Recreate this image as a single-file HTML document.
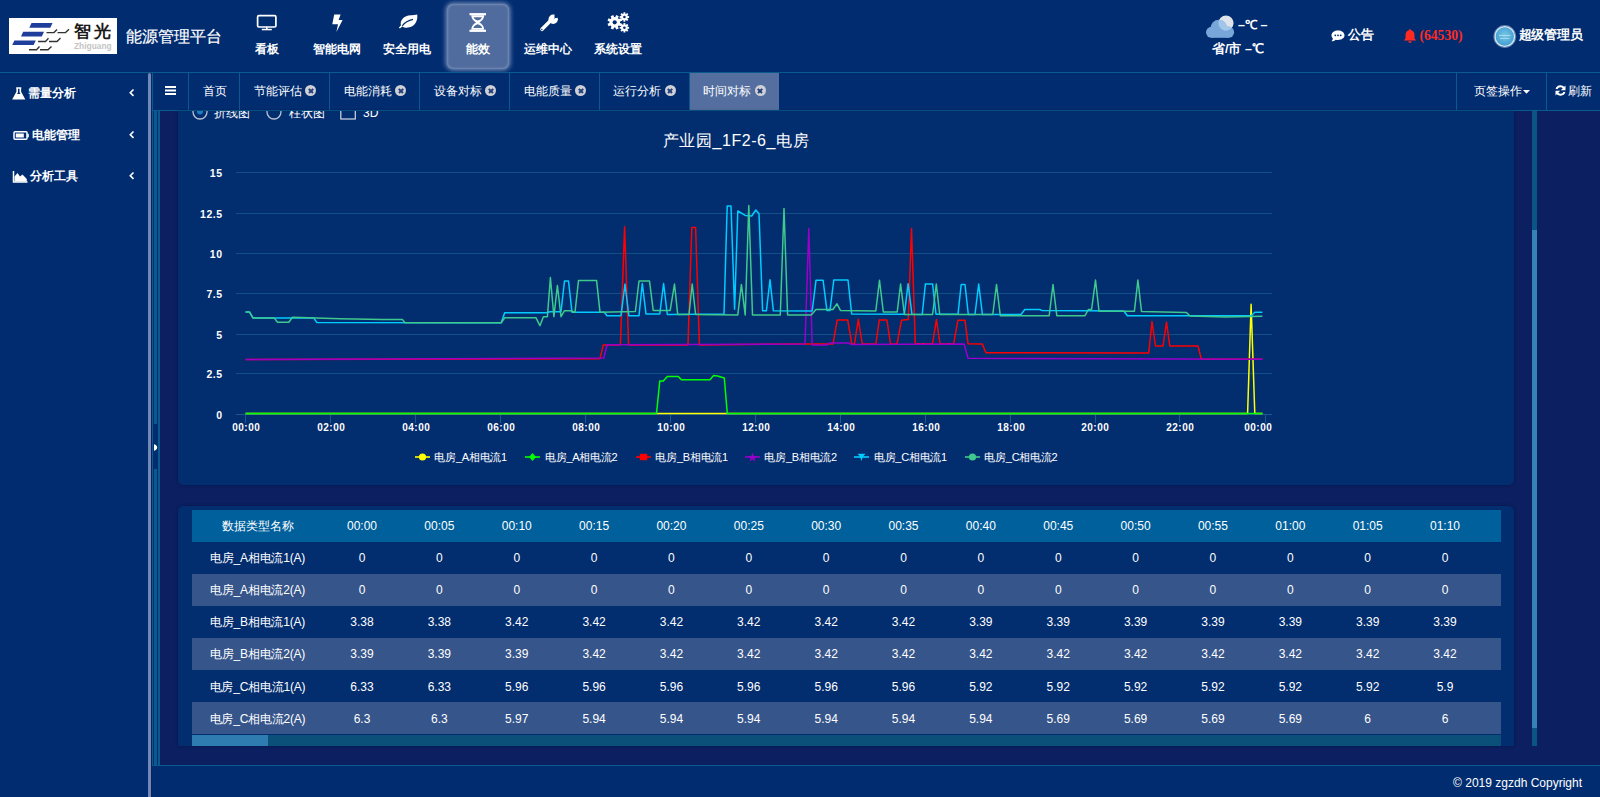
<!DOCTYPE html>
<html><head><meta charset="utf-8"><style>
*{margin:0;padding:0;box-sizing:border-box}
html,body{width:1600px;height:797px;overflow:hidden}
body{background:#0b1f61;font-family:"Liberation Sans",sans-serif;color:#fff;position:relative}
.a{position:absolute}
.t{position:absolute;white-space:nowrap;line-height:1}
.b{font-weight:bold}
.x{display:inline-block;width:11px;height:11px;border-radius:50%;background:#cfd0d6;position:absolute;top:13px}
.x:before,.x:after{content:"";position:absolute;left:2.5px;top:4.7px;width:6px;height:1.7px;background:#253f7a;transform:rotate(45deg)}
.x:after{transform:rotate(-45deg)}
</style></head><body>
<div class="a" style="left:0;top:0;width:1600px;height:72px;background:#012c70"></div>
<div class="a" style="left:9px;top:18px;width:108px;height:36px;background:#fff"></div>
<svg class="a" style="left:0;top:0" width="130" height="60" viewBox="0 0 130 60">
<polygon points="31.5,23 52.5,23 50.3,27.7 29.3,27.7" fill="#1f3e9c"/>
<polygon points="23.2,31.8 44,31.8 41.8,36.4 21,36.4" fill="#1f3e9c"/>
<polygon points="14.4,40.5 35.8,40.5 33.6,45 12.2,45" fill="#1f3e9c"/>
<g fill="none" stroke="#333" stroke-width="1.4">
<path d="M46.5,32.6 H54 L57,29.5 M57.5,32.6 H65.5 L69,29.3"/>
<path d="M38,41.5 H45.5 L48.5,38.3 M49,41.5 H57 L60.5,38.1"/>
<path d="M29,49.8 H36.5 L39.5,46.6 M40,49.8 H48 L51.5,46.4"/>
</g>
</svg>
<div class="t b" style="left:73.5px;top:23.2px;font-size:17px;color:#1a1a1a;letter-spacing:3px">智光</div>
<div class="t b" style="left:74px;top:42px;font-size:9px;color:#c4c4c4;transform:scaleX(0.93);transform-origin:0 0">Zhiguang</div>
<div class="t" style="left:126px;top:28.2px;font-size:16.4px;color:#fff;-webkit-text-stroke:0.2px #fff">能源管理平台</div>

<div class="a" style="left:446.5px;top:4px;width:62.5px;height:64.5px;background:#506c9e;border-radius:6px;box-shadow:0 0 5px 1px rgba(220,230,250,0.6), inset 0 0 3px rgba(220,230,250,0.5)"></div>
<div class="t b" style="left:227px;width:80px;text-align:center;top:42.5px;font-size:12px">看板</div>
<div class="t b" style="left:297.4px;width:80px;text-align:center;top:42.5px;font-size:12px">智能电网</div>
<div class="t b" style="left:367px;width:80px;text-align:center;top:42.5px;font-size:12px">安全用电</div>
<div class="t b" style="left:438px;width:80px;text-align:center;top:42.5px;font-size:12px">能效</div>
<div class="t b" style="left:508px;width:80px;text-align:center;top:42.5px;font-size:12px">运维中心</div>
<div class="t b" style="left:578px;width:80px;text-align:center;top:42.5px;font-size:12px">系统设置</div>
<svg class="a" style="left:0;top:0" width="700" height="40" viewBox="0 0 700 40">
<g fill="none" stroke="#fff" stroke-width="1.7">
<rect x="257.6" y="15.6" width="18.3" height="11.4" rx="1.3"/>
</g>
<rect x="261.8" y="28.8" width="10" height="1.5" fill="#fff"/>
<rect x="266" y="26.8" width="1.6" height="2.5" fill="#fff"/>
<path d="M334.2,14.6 L340.6,14.6 L338.6,19.9 L342.6,19.9 L336.4,31.9 L338,24.2 L332.3,24.2 Z" fill="#fff"/>
<path d="M417.2,14.6 C418,20 415.5,27 408,27.6 C405.5,27.8 403.5,27.2 402.2,26.4 L400,28.5 L398.8,27.7 L401,25.3 C400,22.5 401.6,18.6 405.6,16.6 C409,14.9 413.5,15.6 417.2,14.6 Z" fill="#fff"/>
<path d="M402.3,25.8 C404.8,22.3 408.5,20.2 413,19.3" fill="none" stroke="#012c70" stroke-width="1.2"/>
<g fill="#fff">
<rect x="469.5" y="13.1" width="16.5" height="2.2"/>
<rect x="469.5" y="29.7" width="16.5" height="2.2"/>
<path d="M471.3,15.3 H484.2 C484.2,19 481.5,21.3 479.4,22.5 C481.5,23.7 484.2,26 484.2,29.7 H471.3 C471.3,26 474,23.7 476.1,22.5 C474,21.3 471.3,19 471.3,15.3 Z M473.6,17.2 C474.2,19 475.8,20 477.75,20.6 C479.7,20 481.3,19 481.9,17.2 Z M473.3,28 H482.2 C481.5,26 479.6,24.8 477.75,24.3 C475.9,24.8 474,26 473.3,28 Z"/>
</g>
<line x1="542" y1="29.3" x2="550.5" y2="20.8" stroke="#fff" stroke-width="3.6" stroke-linecap="round"/>
<circle cx="553.2" cy="19.2" r="4.7" fill="#fff"/>
<path d="M553.6,18.8 L557.5,14.2 L559.5,16.5 Z" fill="#012c70"/>
<circle cx="556.4" cy="16" r="2.1" fill="#012c70"/>
<circle cx="541.8" cy="29.5" r="0.75" fill="#012c70"/>
<circle cx="614.7" cy="22.3" r="5.2" fill="#fff"/><rect x="613.3000000000001" y="15.100000000000001" width="2.8" height="7.2" fill="#fff" transform="rotate(22.5 614.7 22.3)"/><rect x="613.3000000000001" y="15.100000000000001" width="2.8" height="7.2" fill="#fff" transform="rotate(67.5 614.7 22.3)"/><rect x="613.3000000000001" y="15.100000000000001" width="2.8" height="7.2" fill="#fff" transform="rotate(112.5 614.7 22.3)"/><rect x="613.3000000000001" y="15.100000000000001" width="2.8" height="7.2" fill="#fff" transform="rotate(157.5 614.7 22.3)"/><rect x="613.3000000000001" y="15.100000000000001" width="2.8" height="7.2" fill="#fff" transform="rotate(202.5 614.7 22.3)"/><rect x="613.3000000000001" y="15.100000000000001" width="2.8" height="7.2" fill="#fff" transform="rotate(247.5 614.7 22.3)"/><rect x="613.3000000000001" y="15.100000000000001" width="2.8" height="7.2" fill="#fff" transform="rotate(292.5 614.7 22.3)"/><rect x="613.3000000000001" y="15.100000000000001" width="2.8" height="7.2" fill="#fff" transform="rotate(337.5 614.7 22.3)"/><circle cx="614.7" cy="22.3" r="2.1" fill="#012c70"/><circle cx="624.4" cy="17" r="3.3" fill="#fff"/><rect x="623.4499999999999" y="12.3" width="1.9" height="4.7" fill="#fff" transform="rotate(0.0 624.4 17)"/><rect x="623.4499999999999" y="12.3" width="1.9" height="4.7" fill="#fff" transform="rotate(45.0 624.4 17)"/><rect x="623.4499999999999" y="12.3" width="1.9" height="4.7" fill="#fff" transform="rotate(90.0 624.4 17)"/><rect x="623.4499999999999" y="12.3" width="1.9" height="4.7" fill="#fff" transform="rotate(135.0 624.4 17)"/><rect x="623.4499999999999" y="12.3" width="1.9" height="4.7" fill="#fff" transform="rotate(180.0 624.4 17)"/><rect x="623.4499999999999" y="12.3" width="1.9" height="4.7" fill="#fff" transform="rotate(225.0 624.4 17)"/><rect x="623.4499999999999" y="12.3" width="1.9" height="4.7" fill="#fff" transform="rotate(270.0 624.4 17)"/><rect x="623.4499999999999" y="12.3" width="1.9" height="4.7" fill="#fff" transform="rotate(315.0 624.4 17)"/><circle cx="624.4" cy="17" r="1.3" fill="#012c70"/><circle cx="624.4" cy="27.8" r="3.3" fill="#fff"/><rect x="623.4499999999999" y="23.1" width="1.9" height="4.7" fill="#fff" transform="rotate(0.0 624.4 27.8)"/><rect x="623.4499999999999" y="23.1" width="1.9" height="4.7" fill="#fff" transform="rotate(45.0 624.4 27.8)"/><rect x="623.4499999999999" y="23.1" width="1.9" height="4.7" fill="#fff" transform="rotate(90.0 624.4 27.8)"/><rect x="623.4499999999999" y="23.1" width="1.9" height="4.7" fill="#fff" transform="rotate(135.0 624.4 27.8)"/><rect x="623.4499999999999" y="23.1" width="1.9" height="4.7" fill="#fff" transform="rotate(180.0 624.4 27.8)"/><rect x="623.4499999999999" y="23.1" width="1.9" height="4.7" fill="#fff" transform="rotate(225.0 624.4 27.8)"/><rect x="623.4499999999999" y="23.1" width="1.9" height="4.7" fill="#fff" transform="rotate(270.0 624.4 27.8)"/><rect x="623.4499999999999" y="23.1" width="1.9" height="4.7" fill="#fff" transform="rotate(315.0 624.4 27.8)"/><circle cx="624.4" cy="27.8" r="1.3" fill="#012c70"/>
</svg>
<svg class="a" style="left:1200px;top:10px" width="40" height="32" viewBox="0 0 40 32">
<defs><clipPath id="cc"><circle cx="26" cy="13" r="7.6"/></clipPath></defs>
<circle cx="26" cy="13" r="7.6" fill="#dfe3ea"/>
<g fill="#78a6d8">
<circle cx="11.5" cy="22.3" r="5.5"/>
<circle cx="18.8" cy="18" r="8.2"/>
<circle cx="28.5" cy="22.2" r="5.6"/>
<rect x="11.5" y="20" width="17" height="7.8"/>
</g>
<g clip-path="url(#cc)" fill="#a2c6ea"><circle cx="18.8" cy="18" r="8.2"/><rect x="11.5" y="20" width="17" height="3"/><circle cx="28.5" cy="22.2" r="5.6"/></g>
</svg>
<div class="t b" style="left:1238px;top:19.2px;font-size:12.5px">–℃ –</div>
<div class="t b" style="left:1212px;top:43.2px;font-size:12.5px">省/市 –℃</div>
<svg class="a" style="left:1330px;top:29px" width="16" height="14" viewBox="0 0 16 14">
<path d="M8,1.5 C11.8,1.5 14.5,3.6 14.5,6.3 C14.5,9 11.8,11 8,11 C7.2,11 6.5,10.9 5.8,10.7 C4.5,11.8 3,12.3 1.5,12.3 C2.3,11.5 2.8,10.6 2.9,9.6 C2,8.7 1.5,7.6 1.5,6.3 C1.5,3.6 4.2,1.5 8,1.5 Z" fill="#fff"/>
<circle cx="5.3" cy="6.3" r="0.9" fill="#012c70"/><circle cx="8" cy="6.3" r="0.9" fill="#012c70"/><circle cx="10.7" cy="6.3" r="0.9" fill="#012c70"/>
</svg>
<div class="t b" style="left:1348px;top:29px;font-size:12.5px">公告</div>
<svg class="a" style="left:1402px;top:28px" width="16" height="16" viewBox="0 0 16 16">
<path d="M8,1.2 C8.8,1.2 9.2,1.7 9.2,2.3 C11.5,2.9 12.5,4.8 12.5,7.2 L12.5,10.5 L14.3,12.6 L1.7,12.6 L3.5,10.5 L3.5,7.2 C3.5,4.8 4.5,2.9 6.8,2.3 C6.8,1.7 7.2,1.2 8,1.2 Z M6.3,13.3 H9.7 C9.7,14.3 9,15 8,15 C7,15 6.3,14.3 6.3,13.3 Z" fill="#ff2a22"/>
</svg>
<div class="t b" style="left:1419.5px;top:28.5px;font-size:13.6px;color:#ff2a22;font-family:'Liberation Serif',serif">(64530)</div>
<svg class="a" style="left:1490px;top:22px" width="30" height="30" viewBox="0 0 30 30">
<defs><radialGradient id="ag" cx="50%" cy="45%" r="55%"><stop offset="0" stop-color="#7cc8e6"/><stop offset="1" stop-color="#3d9cd0"/></radialGradient></defs>
<circle cx="14.8" cy="14.5" r="10.8" fill="none" stroke="#9bb8d8" stroke-width="1.2" opacity="0.6"/>
<circle cx="14.8" cy="14.5" r="9.8" fill="url(#ag)" stroke="#d6e6f4" stroke-width="1.3"/>
<rect x="9" y="13" width="11.5" height="1" fill="#a5dcf0"/>
<rect x="10" y="16" width="9.5" height="0.9" fill="#a5dcf0"/>
</svg>
<div class="t b" style="left:1518.5px;top:29px;font-size:12.5px;letter-spacing:-0.1px">超级管理员</div>

<div class="a" style="left:0;top:72px;width:148px;height:725px;background:#012c70"></div>
<div class="a" style="left:148px;top:73px;width:3px;height:724px;background:#7189b5;border-radius:1.5px 1.5px 0 0"></div>
<div class="t b" style="left:28px;top:87.0px;font-size:12px">需量分析</div>
<svg class="a" style="left:128px;top:87.5px" width="8" height="10" viewBox="0 0 8 10"><path d="M5.5,1.5 L2.3,4.7 L5.5,7.9" fill="none" stroke="#fff" stroke-width="1.6"/></svg>
<div class="t b" style="left:31.5px;top:129.0px;font-size:12px">电能管理</div>
<svg class="a" style="left:128px;top:129.5px" width="8" height="10" viewBox="0 0 8 10"><path d="M5.5,1.5 L2.3,4.7 L5.5,7.9" fill="none" stroke="#fff" stroke-width="1.6"/></svg>
<div class="t b" style="left:30px;top:170.3px;font-size:12px">分析工具</div>
<svg class="a" style="left:128px;top:170.8px" width="8" height="10" viewBox="0 0 8 10"><path d="M5.5,1.5 L2.3,4.7 L5.5,7.9" fill="none" stroke="#fff" stroke-width="1.6"/></svg>
<svg class="a" style="left:0;top:80px" width="40" height="110" viewBox="0 0 40 110">
<path d="M16.2,8 H21.3 M17.2,8.2 V12 L13.5,18.8 H24 L20.3,12 V8.2" fill="none" stroke="#fff" stroke-width="1.6"/>
<path d="M16,14 H21.5 L24,18.8 H13.5 Z" fill="#fff"/>
<rect x="14" y="51.8" width="13" height="7.5" rx="1" fill="none" stroke="#fff" stroke-width="1.5"/>
<rect x="15.8" y="53.5" width="8" height="4" fill="#fff"/>
<rect x="27.2" y="53.8" width="1.6" height="3.5" fill="#fff"/>
<path d="M13.5,91 V102 H27.5" fill="none" stroke="#fff" stroke-width="1.5"/>
<path d="M14.5,101.5 V96.5 L17.5,93 L20,96.5 L22.5,94.5 L26.8,99 V101.5 Z" fill="#fff"/>
</svg>
<div class="a" style="left:151px;top:72px;width:1449px;height:39px;background:#012c70"></div>
<div class="a" style="left:0;top:72px;width:1600px;height:1px;background:#0a5a8e"></div>
<div class="a" style="left:152px;top:110px;width:1448px;height:1px;background:#0a5a8e"></div>
<div class="a" style="left:152px;top:73px;width:1px;height:692px;background:#0a5a8e"></div>
<svg class="a" style="left:164px;top:85px" width="14" height="12" viewBox="0 0 14 12"><rect x="1" y="1" width="11" height="2" fill="#fff"/><rect x="1" y="4.5" width="11" height="2" fill="#fff"/><rect x="1" y="8" width="11" height="2" fill="#fff"/></svg>
<div class="a" style="left:188px;top:73px;width:1px;height:37px;background:#0a5a8e"></div>
<div class="a" style="left:239px;top:73px;width:1px;height:37px;background:#0a5a8e"></div>
<div class="a" style="left:329px;top:73px;width:1px;height:37px;background:#0a5a8e"></div>
<div class="a" style="left:419px;top:73px;width:1px;height:37px;background:#0a5a8e"></div>
<div class="a" style="left:509px;top:73px;width:1px;height:37px;background:#0a5a8e"></div>
<div class="a" style="left:599px;top:73px;width:1px;height:37px;background:#0a5a8e"></div>
<div class="a" style="left:689px;top:73px;width:1px;height:37px;background:#0a5a8e"></div>
<div class="a" style="left:1456px;top:73px;width:1px;height:37px;background:#0a5a8e"></div>
<div class="a" style="left:1546px;top:73px;width:1px;height:37px;background:#0a5a8e"></div>
<div class="a" style="left:690px;top:73px;width:89px;height:37px;background:#546f9f"></div>
<div class="t" style="left:202.5px;top:84.5px;font-size:12px">首页</div>
<div class="t" style="left:253.75px;top:84.5px;font-size:12px">节能评估</div>
<span class="x" style="left:305.25px;top:85px"></span>
<div class="t" style="left:343.75px;top:84.5px;font-size:12px">电能消耗</div>
<span class="x" style="left:395.25px;top:85px"></span>
<div class="t" style="left:433.75px;top:84.5px;font-size:12px">设备对标</div>
<span class="x" style="left:485.25px;top:85px"></span>
<div class="t" style="left:523.75px;top:84.5px;font-size:12px">电能质量</div>
<span class="x" style="left:575.25px;top:85px"></span>
<div class="t" style="left:613.25px;top:84.5px;font-size:12px">运行分析</div>
<span class="x" style="left:664.75px;top:85px"></span>
<div class="t" style="left:703px;top:84.5px;font-size:12px">时间对标</div>
<span class="x" style="left:754.5px;top:85px"></span>
<div class="t" style="left:1474px;top:84.5px;font-size:12px">页签操作</div>
<svg class="a" style="left:1522px;top:89px" width="9" height="6" viewBox="0 0 9 6"><path d="M1,1 H8 L4.5,4.8 Z" fill="#fff"/></svg>
<svg class="a" style="left:1554px;top:84px" width="13" height="13" viewBox="0 0 13 13">
<path d="M10.3,4.5 A4.3,4.3 0 0 0 2.5,5" fill="none" stroke="#fff" stroke-width="2"/>
<path d="M11.5,1.5 V6.2 H6.8 Z" fill="#fff"/>
<path d="M2.7,8.5 A4.3,4.3 0 0 0 10.5,8" fill="none" stroke="#fff" stroke-width="2"/>
<path d="M1.5,11.5 V6.8 H6.2 Z" fill="#fff"/>
</svg>
<div class="t" style="left:1568.4px;top:84.5px;font-size:12px">刷新</div>
<div class="a" style="left:153px;top:111px;width:5px;height:654px;background:#012c70"></div>
<div class="a" style="left:154px;top:111px;width:3px;height:313px;background:#0b5a8f"></div>
<div class="a" style="left:154px;top:469px;width:3px;height:296px;background:#0b5a8f"></div>
<div class="a" style="left:158px;top:111px;width:2px;height:654px;background:#0a5a8e"></div>
<svg class="a" style="left:154px;top:443.5px" width="4" height="8" viewBox="0 0 4 8"><path d="M0,0.3 L1.5,0.8 C2.6,1.6 3.2,2.6 3.2,3.5 C3.2,4.4 2.6,5.4 1.5,6.2 L0,6.7 Z" fill="#fff"/></svg>
<div class="a" style="left:178px;top:111px;width:1335.5px;height:374px;background:#022d6f;border-radius:0 0 5px 5px;box-shadow:0 0 3px rgba(0,0,20,0.35)"></div>
<div class="a" style="left:178px;top:111px;width:400px;height:20px;overflow:hidden">
<svg class="a" style="left:0;top:-20px" width="400" height="40" viewBox="178 91 400 40">
<circle cx="200" cy="112" r="7" fill="none" stroke="#b9c2d3" stroke-width="1.3"/>
<circle cx="200" cy="111.5" r="3" fill="#1d7cc4"/>
<circle cx="274" cy="112" r="7" fill="none" stroke="#b9c2d3" stroke-width="1.3"/>
<rect x="340.8" y="104.5" width="14.5" height="14.5" fill="none" stroke="#d5dae4" stroke-width="1.2"/>
</svg>
<div class="t" style="left:36.4px;top:-4.5px;font-size:12px">折线图</div>
<div class="t" style="left:110.7px;top:-4.5px;font-size:12px">柱状图</div>
<div class="t" style="left:185px;top:-4.5px;font-size:12px">3D</div>
</div>
<svg class="a" style="left:0;top:0" width="1600" height="500" viewBox="0 0 1600 500"><line x1="236" y1="172.5" x2="1272" y2="172.5" stroke="#134f87" stroke-width="1"/><line x1="236" y1="213.5" x2="1272" y2="213.5" stroke="#134f87" stroke-width="1"/><line x1="236" y1="253.5" x2="1272" y2="253.5" stroke="#134f87" stroke-width="1"/><line x1="236" y1="293.5" x2="1272" y2="293.5" stroke="#134f87" stroke-width="1"/><line x1="236" y1="334.5" x2="1272" y2="334.5" stroke="#134f87" stroke-width="1"/><line x1="236" y1="373.5" x2="1272" y2="373.5" stroke="#134f87" stroke-width="1"/><line x1="236" y1="414.5" x2="1272" y2="414.5" stroke="#1a5a90" stroke-width="1"/><line x1="245.5" y1="414" x2="245.5" y2="423" stroke="#1a5a90" stroke-width="1"/><line x1="330.5" y1="414" x2="330.5" y2="423" stroke="#1a5a90" stroke-width="1"/><line x1="415.5" y1="414" x2="415.5" y2="423" stroke="#1a5a90" stroke-width="1"/><line x1="500.5" y1="414" x2="500.5" y2="423" stroke="#1a5a90" stroke-width="1"/><line x1="585.5" y1="414" x2="585.5" y2="423" stroke="#1a5a90" stroke-width="1"/><line x1="670.5" y1="414" x2="670.5" y2="423" stroke="#1a5a90" stroke-width="1"/><line x1="755.5" y1="414" x2="755.5" y2="423" stroke="#1a5a90" stroke-width="1"/><line x1="840.5" y1="414" x2="840.5" y2="423" stroke="#1a5a90" stroke-width="1"/><line x1="925.5" y1="414" x2="925.5" y2="423" stroke="#1a5a90" stroke-width="1"/><line x1="1010.5" y1="414" x2="1010.5" y2="423" stroke="#1a5a90" stroke-width="1"/><line x1="1095.5" y1="414" x2="1095.5" y2="423" stroke="#1a5a90" stroke-width="1"/><line x1="1179.5" y1="414" x2="1179.5" y2="423" stroke="#1a5a90" stroke-width="1"/><line x1="1265.5" y1="414" x2="1265.5" y2="423" stroke="#1a5a90" stroke-width="1"/><polyline points="245.6,413.5 1247.6,413.5 1251.1,304.2 1254.8,413.5 1262.4,413.5" fill="none" stroke="#ffff00" stroke-width="1.5" stroke-linejoin="round"/><polyline points="245.6,413.5 656.5,413.5 659.8,380.9 663.3,380.9 667.3,376.5 678.3,376.5 681.4,379.8 710,379.8 713.4,375.6 717.5,376 724.3,378 727.3,413.5 1262.4,413.5" fill="none" stroke="#00ff00" stroke-width="1.5" stroke-linejoin="round"/><polyline points="245.6,359.5 600,358.7 603.3,344.9 620.4,344.9 624.6,226.7 628.6,344.9 688,344.9 691.8,227.6 695.6,227.6 699.4,344.9 805.8,344 833,344 837.2,319.9 847.7,319.9 851.8,344 854.5,344 858.3,319.3 862.3,344 875.9,344 879.3,319.9 886.9,319.9 890.5,344 897,344 901.5,320.3 908.3,319.6 911.5,228.6 915.3,343.7 932.6,343.7 936.4,319.6 940,343.7 953.7,343.7 957.9,320.3 965,320.3 968,343.7 982.3,344.1 986,352.7 1148.7,353.1 1152,321.5 1155.5,346 1163,346 1166.5,322.3 1169.8,346 1198,346 1201.4,359.3 1262.4,359.2" fill="none" stroke="#ff0000" stroke-width="1.5" stroke-linejoin="round"/><polyline points="245.6,359.5 603.8,358 607.1,344.7 805,344 808.8,228.5 812.2,344.9 827,344.9 830,342.9 848.8,342.9 851,344.4 964.2,344 968,358.3 1262.4,359.2" fill="none" stroke="#9900cc" stroke-width="1.5" stroke-linejoin="round"/><polyline points="245.6,311.9 249.4,311.9 253.1,318.1 313.75,318.1 316.9,322.5 501.2,322.7 504.7,312.7 546.4,312.7 550,311.7 561,311.7 564.5,281 568.5,281 572,312.2 604.3,312.2 607,315.7 621,315.7 625,284 628.8,315.7 639,315.7 642.3,283.5 646,314 659.8,314 663.6,283.5 667.3,314.5 724,314 727.2,206.1 731,206.1 734.6,309.2 737.8,211 745.2,215.4 751.7,216 755.8,210 759,213.8 762.6,310.8 766.4,310.8 770,279.8 773.4,310.8 812.2,311 816,280.3 823.1,280.3 826.9,310.4 830,310.4 833.8,280 848,280 851.7,314 904.4,314.2 908.1,283.7 911.9,314.2 922.2,314.5 925.4,284 932.6,284 936,314.2 958,314.2 961.2,284.5 965,284.5 968.3,314.5 975,314.5 978.7,284 982.4,314.5 1021,314.5 1024.8,309.5 1039.8,309.5 1041.7,310.4 1123.9,311 1127.3,315.8 1251.1,315.8 1254.9,312.2 1262.4,312.2" fill="none" stroke="#00ccff" stroke-width="1.5" stroke-linejoin="round"/><polyline points="245.6,311.9 249.4,311.9 253.1,318.1 274.4,318.1 277.5,322.3 288.8,322.3 292.5,317.3 340,318.8 382.5,319.4 402.5,319.6 405,322.8 501.2,322.7 504.7,317.7 535.9,317.7 539.9,325.7 543.4,316.7 547.4,316.7 550.4,277.6 553.9,316.7 557.4,285.6 561,316.7 564.5,310.7 570.5,310.7 575,312.2 578.5,280.6 596.6,280.6 600,312.2 635.4,311.5 639,281 649.5,281 653.2,310.4 670.2,310.4 674.5,284 677.7,314.5 689,314.5 692.2,284 695.6,314.5 737.8,314.9 741.4,284.4 745.2,314.9 748.8,205.6 752.5,315 780.3,315 784,208.4 787.6,315 811.2,315 816,309.5 832.9,309.5 837,303.8 840.4,310.4 875.8,311 879.5,280.3 883.3,312 897.2,312 900.6,284 904.4,314.5 932.6,314.5 936.3,284 939.7,314.5 992.8,314.5 996.5,284.5 1000.3,315.7 1049.2,315.7 1053,284.5 1056.8,315.7 1085,315.7 1088.4,309.5 1091.6,309.5 1095.5,280.1 1099,311.2 1134.4,311.2 1137.9,280.1 1141.5,311.4 1186.4,312.5 1190,316 1225.5,317 1262.4,316.2" fill="none" stroke="#3fc98e" stroke-width="1.5" stroke-linejoin="round"/></svg>
<div class="t" style="left:536px;width:400px;text-align:center;top:133px;font-size:16px;letter-spacing:0.55px">产业园_1F2-6_电房</div>
<div class="t b" style="left:160px;width:62.5px;text-align:right;top:168.0px;font-size:10.5px;letter-spacing:0.5px">15</div>
<div class="t b" style="left:160px;width:62.5px;text-align:right;top:209.0px;font-size:10.5px;letter-spacing:0.5px">12.5</div>
<div class="t b" style="left:160px;width:62.5px;text-align:right;top:249.0px;font-size:10.5px;letter-spacing:0.5px">10</div>
<div class="t b" style="left:160px;width:62.5px;text-align:right;top:289.0px;font-size:10.5px;letter-spacing:0.5px">7.5</div>
<div class="t b" style="left:160px;width:62.5px;text-align:right;top:330.0px;font-size:10.5px;letter-spacing:0.5px">5</div>
<div class="t b" style="left:160px;width:62.5px;text-align:right;top:369.0px;font-size:10.5px;letter-spacing:0.5px">2.5</div>
<div class="t b" style="left:160px;width:62.5px;text-align:right;top:409.5px;font-size:10.5px;letter-spacing:0.5px">0</div>
<div class="t b" style="left:216.3px;width:60px;text-align:center;top:422.5px;font-size:10px;letter-spacing:0.5px">00:00</div>
<div class="t b" style="left:301.3px;width:60px;text-align:center;top:422.5px;font-size:10px;letter-spacing:0.5px">02:00</div>
<div class="t b" style="left:386.3px;width:60px;text-align:center;top:422.5px;font-size:10px;letter-spacing:0.5px">04:00</div>
<div class="t b" style="left:471.3px;width:60px;text-align:center;top:422.5px;font-size:10px;letter-spacing:0.5px">06:00</div>
<div class="t b" style="left:556.3px;width:60px;text-align:center;top:422.5px;font-size:10px;letter-spacing:0.5px">08:00</div>
<div class="t b" style="left:641.3px;width:60px;text-align:center;top:422.5px;font-size:10px;letter-spacing:0.5px">10:00</div>
<div class="t b" style="left:726.3px;width:60px;text-align:center;top:422.5px;font-size:10px;letter-spacing:0.5px">12:00</div>
<div class="t b" style="left:811.3px;width:60px;text-align:center;top:422.5px;font-size:10px;letter-spacing:0.5px">14:00</div>
<div class="t b" style="left:896.3px;width:60px;text-align:center;top:422.5px;font-size:10px;letter-spacing:0.5px">16:00</div>
<div class="t b" style="left:981.3px;width:60px;text-align:center;top:422.5px;font-size:10px;letter-spacing:0.5px">18:00</div>
<div class="t b" style="left:1065.3px;width:60px;text-align:center;top:422.5px;font-size:10px;letter-spacing:0.5px">20:00</div>
<div class="t b" style="left:1150.3px;width:60px;text-align:center;top:422.5px;font-size:10px;letter-spacing:0.5px">22:00</div>
<div class="t b" style="left:1228.3px;width:60px;text-align:center;top:422.5px;font-size:10px;letter-spacing:0.5px">00:00</div>
<svg class="a" style="left:414.9px;top:452px" width="15" height="10" viewBox="0 0 15 10"><rect x="0" y="4.2" width="15" height="1.6" fill="#ffff00"/><circle cx="7.5" cy="5" r="3.6" fill="#ffff00"/></svg>
<div class="t" style="left:434.4px;top:451.5px;font-size:11px;letter-spacing:-0.25px">电房_A相电流1</div>
<svg class="a" style="left:525.4px;top:452px" width="15" height="10" viewBox="0 0 15 10"><rect x="0" y="4.2" width="15" height="1.6" fill="#00ff00"/><path d="M7.5,1 L11,5 L7.5,9 L4,5 Z" fill="#00ff00"/></svg>
<div class="t" style="left:544.9px;top:451.5px;font-size:11px;letter-spacing:-0.25px">电房_A相电流2</div>
<svg class="a" style="left:635.9px;top:452px" width="15" height="10" viewBox="0 0 15 10"><rect x="0" y="4.2" width="15" height="1.6" fill="#ff0000"/><rect x="3.8" y="1.8" width="7.4" height="6.4" fill="#ff0000"/></svg>
<div class="t" style="left:655.4px;top:451.5px;font-size:11px;letter-spacing:-0.25px">电房_B相电流1</div>
<svg class="a" style="left:744.9px;top:452px" width="15" height="10" viewBox="0 0 15 10"><rect x="0" y="4.2" width="15" height="1.6" fill="#9900cc"/><path d="M7.5,0.5 L8.7,3.9 L12.3,3.9 L9.4,6 L10.5,9.5 L7.5,7.4 L4.5,9.5 L5.6,6 L2.7,3.9 L6.3,3.9 Z" fill="#9900cc"/></svg>
<div class="t" style="left:764.4px;top:451.5px;font-size:11px;letter-spacing:-0.25px">电房_B相电流2</div>
<svg class="a" style="left:854.3px;top:452px" width="15" height="10" viewBox="0 0 15 10"><rect x="0" y="4.2" width="15" height="1.6" fill="#00ccff"/><path d="M3.5,1.8 H11.5 L9,4.5 L7.5,9 L6,4.5 Z" fill="#00ccff"/></svg>
<div class="t" style="left:873.8px;top:451.5px;font-size:11px;letter-spacing:-0.25px">电房_C相电流1</div>
<svg class="a" style="left:964.8px;top:452px" width="15" height="10" viewBox="0 0 15 10"><rect x="0" y="4.2" width="15" height="1.6" fill="#3fc98e"/><circle cx="7.5" cy="5" r="3.6" fill="#3fc98e"/></svg>
<div class="t" style="left:984.3px;top:451.5px;font-size:11px;letter-spacing:-0.25px">电房_C相电流2</div>
<div class="a" style="left:178px;top:506px;width:1335.5px;height:240px;background:#022d6f;border-radius:5px 5px 0 0;box-shadow:0 0 3px rgba(0,0,20,0.35)"></div>
<div class="a" style="left:192px;top:510px;width:1309px;height:31.75px;background:#00609c"></div>
<div class="t" style="left:157.5px;width:200px;text-align:center;top:520px;font-size:12px">数据类型名称</div>
<div class="t" style="left:322.00px;width:80px;text-align:center;top:520px;font-size:12px">00:00</div>
<div class="t" style="left:399.36px;width:80px;text-align:center;top:520px;font-size:12px">00:05</div>
<div class="t" style="left:476.72px;width:80px;text-align:center;top:520px;font-size:12px">00:10</div>
<div class="t" style="left:554.08px;width:80px;text-align:center;top:520px;font-size:12px">00:15</div>
<div class="t" style="left:631.44px;width:80px;text-align:center;top:520px;font-size:12px">00:20</div>
<div class="t" style="left:708.80px;width:80px;text-align:center;top:520px;font-size:12px">00:25</div>
<div class="t" style="left:786.16px;width:80px;text-align:center;top:520px;font-size:12px">00:30</div>
<div class="t" style="left:863.52px;width:80px;text-align:center;top:520px;font-size:12px">00:35</div>
<div class="t" style="left:940.88px;width:80px;text-align:center;top:520px;font-size:12px">00:40</div>
<div class="t" style="left:1018.24px;width:80px;text-align:center;top:520px;font-size:12px">00:45</div>
<div class="t" style="left:1095.60px;width:80px;text-align:center;top:520px;font-size:12px">00:50</div>
<div class="t" style="left:1172.96px;width:80px;text-align:center;top:520px;font-size:12px">00:55</div>
<div class="t" style="left:1250.32px;width:80px;text-align:center;top:520px;font-size:12px">01:00</div>
<div class="t" style="left:1327.68px;width:80px;text-align:center;top:520px;font-size:12px">01:05</div>
<div class="t" style="left:1405.04px;width:80px;text-align:center;top:520px;font-size:12px">01:10</div>
<div class="t" style="left:157.5px;width:200px;text-align:center;top:551.75px;font-size:12px;letter-spacing:-0.2px">电房_A相电流1(A)</div>
<div class="t" style="left:322.00px;width:80px;text-align:center;top:551.75px;font-size:12px">0</div>
<div class="t" style="left:399.36px;width:80px;text-align:center;top:551.75px;font-size:12px">0</div>
<div class="t" style="left:476.72px;width:80px;text-align:center;top:551.75px;font-size:12px">0</div>
<div class="t" style="left:554.08px;width:80px;text-align:center;top:551.75px;font-size:12px">0</div>
<div class="t" style="left:631.44px;width:80px;text-align:center;top:551.75px;font-size:12px">0</div>
<div class="t" style="left:708.80px;width:80px;text-align:center;top:551.75px;font-size:12px">0</div>
<div class="t" style="left:786.16px;width:80px;text-align:center;top:551.75px;font-size:12px">0</div>
<div class="t" style="left:863.52px;width:80px;text-align:center;top:551.75px;font-size:12px">0</div>
<div class="t" style="left:940.88px;width:80px;text-align:center;top:551.75px;font-size:12px">0</div>
<div class="t" style="left:1018.24px;width:80px;text-align:center;top:551.75px;font-size:12px">0</div>
<div class="t" style="left:1095.60px;width:80px;text-align:center;top:551.75px;font-size:12px">0</div>
<div class="t" style="left:1172.96px;width:80px;text-align:center;top:551.75px;font-size:12px">0</div>
<div class="t" style="left:1250.32px;width:80px;text-align:center;top:551.75px;font-size:12px">0</div>
<div class="t" style="left:1327.68px;width:80px;text-align:center;top:551.75px;font-size:12px">0</div>
<div class="t" style="left:1405.04px;width:80px;text-align:center;top:551.75px;font-size:12px">0</div>
<div class="a" style="left:192px;top:573.75px;width:1309px;height:32px;background:#36558a"></div>
<div class="t" style="left:157.5px;width:200px;text-align:center;top:583.95px;font-size:12px;letter-spacing:-0.2px">电房_A相电流2(A)</div>
<div class="t" style="left:322.00px;width:80px;text-align:center;top:583.95px;font-size:12px">0</div>
<div class="t" style="left:399.36px;width:80px;text-align:center;top:583.95px;font-size:12px">0</div>
<div class="t" style="left:476.72px;width:80px;text-align:center;top:583.95px;font-size:12px">0</div>
<div class="t" style="left:554.08px;width:80px;text-align:center;top:583.95px;font-size:12px">0</div>
<div class="t" style="left:631.44px;width:80px;text-align:center;top:583.95px;font-size:12px">0</div>
<div class="t" style="left:708.80px;width:80px;text-align:center;top:583.95px;font-size:12px">0</div>
<div class="t" style="left:786.16px;width:80px;text-align:center;top:583.95px;font-size:12px">0</div>
<div class="t" style="left:863.52px;width:80px;text-align:center;top:583.95px;font-size:12px">0</div>
<div class="t" style="left:940.88px;width:80px;text-align:center;top:583.95px;font-size:12px">0</div>
<div class="t" style="left:1018.24px;width:80px;text-align:center;top:583.95px;font-size:12px">0</div>
<div class="t" style="left:1095.60px;width:80px;text-align:center;top:583.95px;font-size:12px">0</div>
<div class="t" style="left:1172.96px;width:80px;text-align:center;top:583.95px;font-size:12px">0</div>
<div class="t" style="left:1250.32px;width:80px;text-align:center;top:583.95px;font-size:12px">0</div>
<div class="t" style="left:1327.68px;width:80px;text-align:center;top:583.95px;font-size:12px">0</div>
<div class="t" style="left:1405.04px;width:80px;text-align:center;top:583.95px;font-size:12px">0</div>
<div class="t" style="left:157.5px;width:200px;text-align:center;top:616.15px;font-size:12px;letter-spacing:-0.2px">电房_B相电流1(A)</div>
<div class="t" style="left:322.00px;width:80px;text-align:center;top:616.15px;font-size:12px">3.38</div>
<div class="t" style="left:399.36px;width:80px;text-align:center;top:616.15px;font-size:12px">3.38</div>
<div class="t" style="left:476.72px;width:80px;text-align:center;top:616.15px;font-size:12px">3.42</div>
<div class="t" style="left:554.08px;width:80px;text-align:center;top:616.15px;font-size:12px">3.42</div>
<div class="t" style="left:631.44px;width:80px;text-align:center;top:616.15px;font-size:12px">3.42</div>
<div class="t" style="left:708.80px;width:80px;text-align:center;top:616.15px;font-size:12px">3.42</div>
<div class="t" style="left:786.16px;width:80px;text-align:center;top:616.15px;font-size:12px">3.42</div>
<div class="t" style="left:863.52px;width:80px;text-align:center;top:616.15px;font-size:12px">3.42</div>
<div class="t" style="left:940.88px;width:80px;text-align:center;top:616.15px;font-size:12px">3.39</div>
<div class="t" style="left:1018.24px;width:80px;text-align:center;top:616.15px;font-size:12px">3.39</div>
<div class="t" style="left:1095.60px;width:80px;text-align:center;top:616.15px;font-size:12px">3.39</div>
<div class="t" style="left:1172.96px;width:80px;text-align:center;top:616.15px;font-size:12px">3.39</div>
<div class="t" style="left:1250.32px;width:80px;text-align:center;top:616.15px;font-size:12px">3.39</div>
<div class="t" style="left:1327.68px;width:80px;text-align:center;top:616.15px;font-size:12px">3.39</div>
<div class="t" style="left:1405.04px;width:80px;text-align:center;top:616.15px;font-size:12px">3.39</div>
<div class="a" style="left:192px;top:637.75px;width:1309px;height:32px;background:#36558a"></div>
<div class="t" style="left:157.5px;width:200px;text-align:center;top:648.35px;font-size:12px;letter-spacing:-0.2px">电房_B相电流2(A)</div>
<div class="t" style="left:322.00px;width:80px;text-align:center;top:648.35px;font-size:12px">3.39</div>
<div class="t" style="left:399.36px;width:80px;text-align:center;top:648.35px;font-size:12px">3.39</div>
<div class="t" style="left:476.72px;width:80px;text-align:center;top:648.35px;font-size:12px">3.39</div>
<div class="t" style="left:554.08px;width:80px;text-align:center;top:648.35px;font-size:12px">3.42</div>
<div class="t" style="left:631.44px;width:80px;text-align:center;top:648.35px;font-size:12px">3.42</div>
<div class="t" style="left:708.80px;width:80px;text-align:center;top:648.35px;font-size:12px">3.42</div>
<div class="t" style="left:786.16px;width:80px;text-align:center;top:648.35px;font-size:12px">3.42</div>
<div class="t" style="left:863.52px;width:80px;text-align:center;top:648.35px;font-size:12px">3.42</div>
<div class="t" style="left:940.88px;width:80px;text-align:center;top:648.35px;font-size:12px">3.42</div>
<div class="t" style="left:1018.24px;width:80px;text-align:center;top:648.35px;font-size:12px">3.42</div>
<div class="t" style="left:1095.60px;width:80px;text-align:center;top:648.35px;font-size:12px">3.42</div>
<div class="t" style="left:1172.96px;width:80px;text-align:center;top:648.35px;font-size:12px">3.42</div>
<div class="t" style="left:1250.32px;width:80px;text-align:center;top:648.35px;font-size:12px">3.42</div>
<div class="t" style="left:1327.68px;width:80px;text-align:center;top:648.35px;font-size:12px">3.42</div>
<div class="t" style="left:1405.04px;width:80px;text-align:center;top:648.35px;font-size:12px">3.42</div>
<div class="t" style="left:157.5px;width:200px;text-align:center;top:680.55px;font-size:12px;letter-spacing:-0.2px">电房_C相电流1(A)</div>
<div class="t" style="left:322.00px;width:80px;text-align:center;top:680.55px;font-size:12px">6.33</div>
<div class="t" style="left:399.36px;width:80px;text-align:center;top:680.55px;font-size:12px">6.33</div>
<div class="t" style="left:476.72px;width:80px;text-align:center;top:680.55px;font-size:12px">5.96</div>
<div class="t" style="left:554.08px;width:80px;text-align:center;top:680.55px;font-size:12px">5.96</div>
<div class="t" style="left:631.44px;width:80px;text-align:center;top:680.55px;font-size:12px">5.96</div>
<div class="t" style="left:708.80px;width:80px;text-align:center;top:680.55px;font-size:12px">5.96</div>
<div class="t" style="left:786.16px;width:80px;text-align:center;top:680.55px;font-size:12px">5.96</div>
<div class="t" style="left:863.52px;width:80px;text-align:center;top:680.55px;font-size:12px">5.96</div>
<div class="t" style="left:940.88px;width:80px;text-align:center;top:680.55px;font-size:12px">5.92</div>
<div class="t" style="left:1018.24px;width:80px;text-align:center;top:680.55px;font-size:12px">5.92</div>
<div class="t" style="left:1095.60px;width:80px;text-align:center;top:680.55px;font-size:12px">5.92</div>
<div class="t" style="left:1172.96px;width:80px;text-align:center;top:680.55px;font-size:12px">5.92</div>
<div class="t" style="left:1250.32px;width:80px;text-align:center;top:680.55px;font-size:12px">5.92</div>
<div class="t" style="left:1327.68px;width:80px;text-align:center;top:680.55px;font-size:12px">5.92</div>
<div class="t" style="left:1405.04px;width:80px;text-align:center;top:680.55px;font-size:12px">5.9</div>
<div class="a" style="left:192px;top:701.75px;width:1309px;height:32px;background:#36558a"></div>
<div class="t" style="left:157.5px;width:200px;text-align:center;top:712.75px;font-size:12px;letter-spacing:-0.2px">电房_C相电流2(A)</div>
<div class="t" style="left:322.00px;width:80px;text-align:center;top:712.75px;font-size:12px">6.3</div>
<div class="t" style="left:399.36px;width:80px;text-align:center;top:712.75px;font-size:12px">6.3</div>
<div class="t" style="left:476.72px;width:80px;text-align:center;top:712.75px;font-size:12px">5.97</div>
<div class="t" style="left:554.08px;width:80px;text-align:center;top:712.75px;font-size:12px">5.94</div>
<div class="t" style="left:631.44px;width:80px;text-align:center;top:712.75px;font-size:12px">5.94</div>
<div class="t" style="left:708.80px;width:80px;text-align:center;top:712.75px;font-size:12px">5.94</div>
<div class="t" style="left:786.16px;width:80px;text-align:center;top:712.75px;font-size:12px">5.94</div>
<div class="t" style="left:863.52px;width:80px;text-align:center;top:712.75px;font-size:12px">5.94</div>
<div class="t" style="left:940.88px;width:80px;text-align:center;top:712.75px;font-size:12px">5.94</div>
<div class="t" style="left:1018.24px;width:80px;text-align:center;top:712.75px;font-size:12px">5.69</div>
<div class="t" style="left:1095.60px;width:80px;text-align:center;top:712.75px;font-size:12px">5.69</div>
<div class="t" style="left:1172.96px;width:80px;text-align:center;top:712.75px;font-size:12px">5.69</div>
<div class="t" style="left:1250.32px;width:80px;text-align:center;top:712.75px;font-size:12px">5.69</div>
<div class="t" style="left:1327.68px;width:80px;text-align:center;top:712.75px;font-size:12px">6</div>
<div class="t" style="left:1405.04px;width:80px;text-align:center;top:712.75px;font-size:12px">6</div>
<div class="a" style="left:192px;top:735px;width:1309px;height:11px;background:#0a5079"></div>
<div class="a" style="left:192px;top:735px;width:76px;height:11px;background:#2f7db0"></div>
<div class="a" style="left:1532px;top:111px;width:5px;height:635px;background:#0a5585"></div>
<div class="a" style="left:1532px;top:230px;width:5px;height:498px;background:#3482b6"></div>
<div class="a" style="left:152px;top:765px;width:1448px;height:32px;background:#012c70"></div>
<div class="a" style="left:152px;top:765px;width:1448px;height:1px;background:#0a5a8e"></div>
<div class="t" style="left:1382px;width:200px;text-align:right;top:777px;font-size:12px">© 2019 zgzdh Copyright</div>
</body></html>
